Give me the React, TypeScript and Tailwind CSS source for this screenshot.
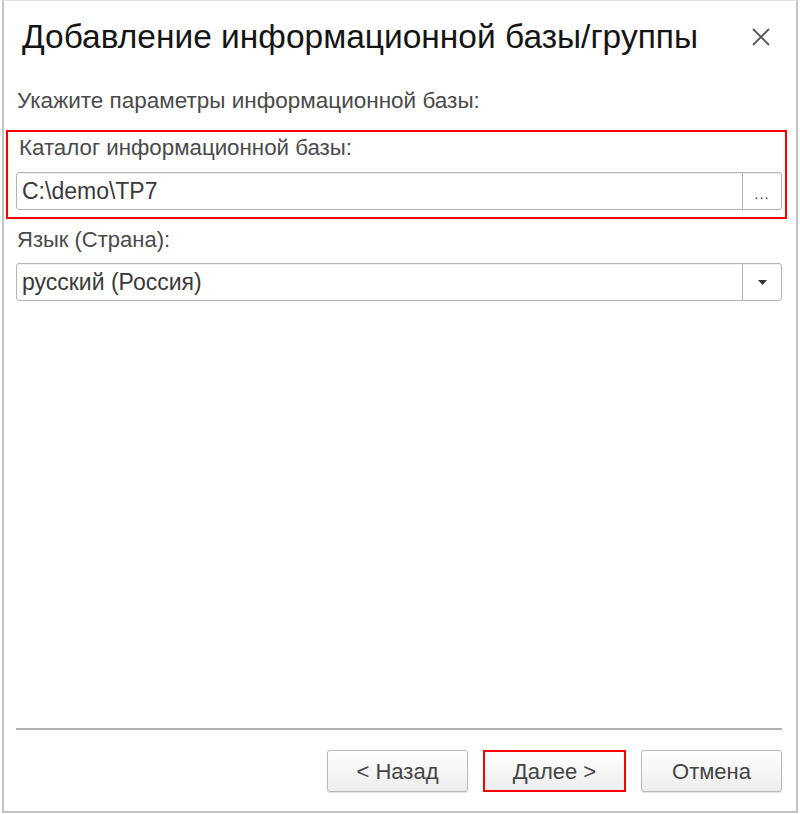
import React from "react";

const font = { fontFamily: '"Liberation Sans", Arial, sans-serif' };

function Field({ value, kind }: { value: string; kind: "dots" | "select" }) {
  return (
    <div className="flex h-[38px] rounded-[3px] border border-[#b4b4b4] bg-white shadow-[inset_0_1px_1px_rgba(0,0,0,0.06)]">
      <div className="flex flex-1 items-center pl-[5px] text-[23px] leading-[26px] text-[#3a3a3a]">{value}</div>
      <div className="flex w-[39px] items-center justify-center border-l border-[#b4b4b4]">
        {kind === "dots" ? (
          <span className="mt-[6px] text-[15px] tracking-[1px] text-[#444]">...</span>
        ) : (
          <svg width="9" height="5" viewBox="0 0 9 5">
            <path d="M0 0h9L4.5 5z" fill="#333" />
          </svg>
        )}
      </div>
    </div>
  );
}

function Btn({ label, hot }: { label: string; hot?: boolean }) {
  return (
    <button
      className={
        "flex h-[42px] items-center justify-center bg-gradient-to-b from-[#ffffff] to-[#ededed] text-[22px] text-[#444] " +
        (hot
          ? "w-[143px] border-2 border-[#ff0000]"
          : "w-[141px] rounded-[3px] border border-[#b9b9b9] shadow-[0_1px_1px_rgba(0,0,0,0.12)]")
      }
    >
      {label}
    </button>
  );
}

export default function App() {
  return (
    <div className="h-[814px] w-[800px] bg-white px-[2px] pb-[1px]" style={font}>
      <div className="flex h-full flex-col border-x-2 border-b-2 border-t border-x-[#c4c4c4] border-b-[#c4c4c4] border-t-[#e2e2e2]">
        {/* header */}
        <div className="flex h-[71px] items-center justify-between pl-[18px] pr-[26px]">
          <h1 className="text-[33.5px] leading-[38px] text-[#151515]">Добавление информационной базы/группы</h1>
          <svg width="18" height="18" viewBox="0 0 18 18">
            <path d="M1 1L17 17M17 1L1 17" stroke="#555" strokeWidth="1.8" />
          </svg>
        </div>

        <div className="pl-[13px] pt-[17px] text-[22.5px] leading-[24px] text-[#4a4a4a]">
          Укажите параметры информационной базы:
        </div>

        {/* highlighted catalog field */}
        <div className="ml-[2px] mr-[9px] mt-[17px] border-2 border-[#ff0000] pb-[7px] pl-[8px] pr-[3px] pt-[4px]">
          <div className="pl-[3px] text-[22.3px] leading-[24px] text-[#4a4a4a]">Каталог информационной базы:</div>
          <div className="mt-[12px]">
            <Field value="C:\demo\TP7" kind="dots" />
          </div>
        </div>

        <div className="pl-[12px] pr-[14px] pt-[9px]">
          <div className="pl-[1px] text-[22px] leading-[24px] text-[#4a4a4a]">Язык (Страна):</div>
          <div className="mt-[11px]">
            <Field value="русский (Россия)" kind="select" />
          </div>
        </div>

        <div className="flex-1" />

        <div className="ml-[12px] mr-[14px] h-[2px] bg-[#b0b0b0]" />

        <div className="flex justify-end gap-[15px] pb-[19px] pr-[14px] pt-[20px]">
          <Btn label="< Назад" />
          <Btn label="Далее >" hot />
          <Btn label="Отмена" />
        </div>
      </div>
    </div>
  );
}
